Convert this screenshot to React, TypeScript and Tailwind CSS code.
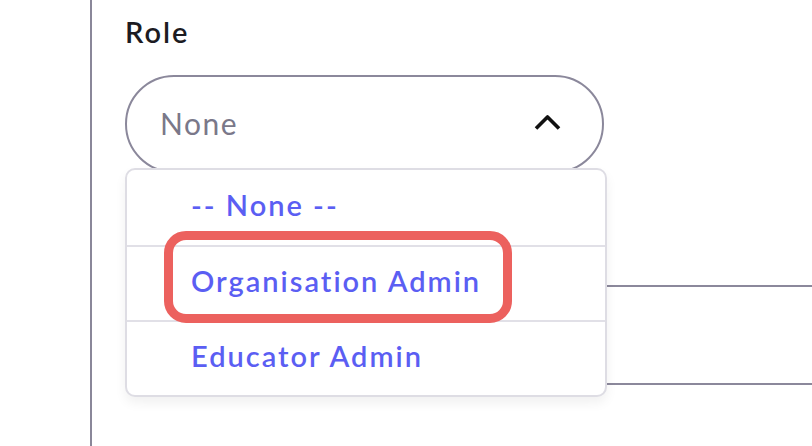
const options = ["-- None --", "Organisation Admin", "Educator Admin"]

export default function App() {
  return (
    <div className="relative w-[812px] h-[446px] overflow-hidden bg-white font-['Lato','Noto_Sans',sans-serif]">
      <div className="h-full ml-[90px] border-l-2 border-[#8a8799] pl-[33px] pt-[13px]">
        <div className="text-[29px] font-semibold leading-[38px] tracking-[2px] text-[#1c1b22]">Role</div>

        <div className="relative mt-[24px] w-[479px]">
          <div className="flex h-[98px] items-center justify-between rounded-full border-2 border-[#8b889b] pl-[33px] pr-[41px]">
            <span className="-mt-[2px] text-[30px] tracking-[1.5px] text-[#7a7889]">None</span>
            <svg width="27" height="17" viewBox="0 0 27 17" fill="none" className="-mt-[4px]">
              <path d="M2 14.5 L13.5 3 L25 14.5" stroke="#111" strokeWidth="3.6" strokeLinejoin="round" />
            </svg>
          </div>

          {/* open menu */}
          <div className="absolute left-0 top-[93px] z-10 w-[482px] rounded-[10px] border-2 border-[#dedde4] bg-white shadow-[0_6px_12px_rgba(0,0,0,0.06)]">
            {options.map((opt, i) => (
              <div
                key={opt}
                className={`flex h-[75px] items-center pl-[64px] pb-[6px] text-[29px] font-semibold tracking-[2px] text-[#5b5ef3] ${
                  i > 0 ? "border-t-2 border-[#e1e0e7]" : ""
                }`}
              >
                {opt}
              </div>
            ))}
            <div className="pointer-events-none absolute left-[37px] top-[61px] h-[92px] w-[348px] rounded-[22px] border-[9px] border-[#ec615e]" />
          </div>
        </div>

        {/* next field, hidden under the menu */}
        <div className="mt-[112px] h-[100px] w-[800px] rounded-full border-2 border-[#8b889b]" />
      </div>
    </div>
  )
}
